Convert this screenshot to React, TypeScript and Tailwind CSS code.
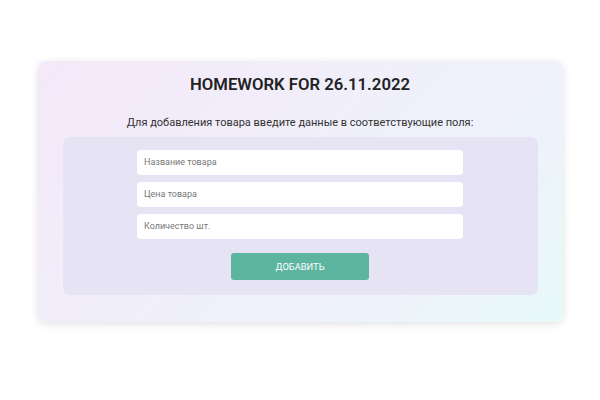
export default function App() {
  const inputs = ["Название товара", "Цена товара", "Количество шт."];
  return (
    <div className="w-[600px] h-[400px] bg-white pt-[61px]" style={{ fontFamily: "Roboto, 'Noto Sans', sans-serif" }}>
      <div className="mx-auto w-[525px] h-[261px] rounded-[8px] bg-[linear-gradient(135deg,#f4e8f9_0%,#f0effa_45%,#eef2fb_70%,#e8f9f8_100%)] shadow-[0_2px_8px_rgba(0,0,0,0.12)] flex flex-col items-center pt-[13px]">
        <h1 className="text-[16.7px] leading-[22px] font-semibold text-[#222]">HOMEWORK FOR 26.11.2022</h1>
        <p className="mt-[20px] text-[11px] leading-[14px] text-[#333]">Для добавления товара введите данные в соответствующие поля:</p>
        <div className="mt-[7px] w-[475px] h-[158px] rounded-[7px] bg-[#e6e3f5] flex flex-col items-center pt-[13px]">
          <div className="flex flex-col gap-[7px]">
            {inputs.map((t) => (
              <div key={t} className="w-[326px] h-[25px] rounded-[4px] bg-white flex items-center px-[7px] text-[9px] text-[#777]">
                {t}
              </div>
            ))}
          </div>
          <button className="mt-[14px] w-[138px] h-[27px] rounded-[3px] bg-[#5db5a0] text-white text-[9.3px] flex items-center justify-center">
            ДОБАВИТЬ
          </button>
        </div>
      </div>
    </div>
  );
}
